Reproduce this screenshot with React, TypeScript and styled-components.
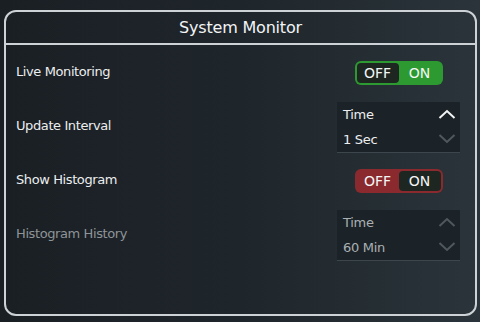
import React from 'react';
import styled, { createGlobalStyle } from 'styled-components';

const GlobalStyle = createGlobalStyle`
  html, body {
    margin: 0;
    padding: 0;
    width: 480px;
    height: 322px;
    overflow: hidden;
  }
  body {
    background: linear-gradient(90deg, #1a1f24 0%, #1f262b 50%, #2a343a 100%);
    font-family: "DejaVu Sans", Tahoma, sans-serif;
    color: #eef0f1;
  }
`;

const Panel = styled.div`
  margin: 10px 3px 0 4px;
  height: 306px;
  border: 2px solid #cdd2d6;
  border-radius: 12px;
  box-sizing: border-box;
  display: flex;
  flex-direction: column;
`;

const Header = styled.div`
  height: 31px;
  display: flex;
  align-items: center;
  justify-content: center;
  font-size: 16px;
  letter-spacing: -0.2px;
  color: #f2f4f5;
  border-bottom: 2px solid #cdd2d6;
`;

const Body = styled.div`
  padding: 1px 15px 0 10px;
  display: flex;
  flex-direction: column;
`;

const Row = styled.div`
  height: 54px;
  display: grid;
  grid-template-columns: 1fr 123px;
  align-items: center;
`;

const Label = styled.span<{ disabled?: boolean }>`
  margin-bottom: 4px;
  font-size: 13px;
  letter-spacing: -0.4px;
  color: ${p => (p.disabled ? '#8e9498' : '#eceeef')};
`;

const ToggleBox = styled.div<{ on: boolean }>`
  justify-self: center;
  width: 88px;
  height: 24px;
  box-sizing: border-box;
  padding: 2px;
  border-radius: 6px;
  display: flex;
  background: ${p => (p.on ? '#2c9a30' : '#8a2a2e')};
`;

const ToggleSeg = styled.div<{ dark: boolean }>`
  flex: 1;
  display: flex;
  align-items: center;
  justify-content: center;
  font-size: 14px;
  color: #f4f6f5;
  border-radius: 4px;
  background: ${p => (p.dark ? '#1e2622' : 'transparent')};
`;

const Dropdown = styled.div`
  width: 123px;
  height: 51px;
  box-sizing: border-box;
  background: #1c2328;
  border-bottom: 1px solid #3d464c;
  display: flex;
  flex-direction: column;
`;

const DropRow = styled.div<{ disabled?: boolean }>`
  flex: 1;
  display: flex;
  align-items: center;
  justify-content: space-between;
  padding: 0 4px 0 6px;
  font-size: 13px;
  letter-spacing: -0.3px;
  color: ${p => (p.disabled ? '#aab0b4' : '#eceeef')};
`;

const Chevron: React.FC<{ up?: boolean; bright?: boolean }> = ({ up, bright }) => (
  <svg width="18" height="10" viewBox="0 0 18 10">
    <path
      d={up ? 'M1.5 9 L9 2 L16.5 9' : 'M1.5 1 L9 8 L16.5 1'}
      fill="none"
      stroke={bright ? '#f2f4f5' : '#4f585e'}
      strokeWidth="2"
    />
  </svg>
);

const Toggle: React.FC<{ on: boolean }> = ({ on }) => (
  <ToggleBox on={on}>
    <ToggleSeg dark={on}>OFF</ToggleSeg>
    <ToggleSeg dark={!on}>ON</ToggleSeg>
  </ToggleBox>
);

const Select: React.FC<{ title: string; value: string; disabled?: boolean }> = ({ title, value, disabled }) => (
  <Dropdown>
    <DropRow disabled={disabled}>
      {title}
      <Chevron up bright={!disabled} />
    </DropRow>
    <DropRow disabled={disabled}>
      {value}
      <Chevron />
    </DropRow>
  </Dropdown>
);

export default function App() {
  return (
    <>
      <GlobalStyle />
      <Panel>
        <Header>System Monitor</Header>
        <Body>
          <Row>
            <Label>Live Monitoring</Label>
            <Toggle on />
          </Row>
          <Row>
            <Label>Update Interval</Label>
            <Select title="Time" value="1 Sec" />
          </Row>
          <Row>
            <Label>Show Histogram</Label>
            <Toggle on={false} />
          </Row>
          <Row>
            <Label disabled>Histogram History</Label>
            <Select title="Time" value="60 Min" disabled />
          </Row>
        </Body>
      </Panel>
    </>
  );
}
